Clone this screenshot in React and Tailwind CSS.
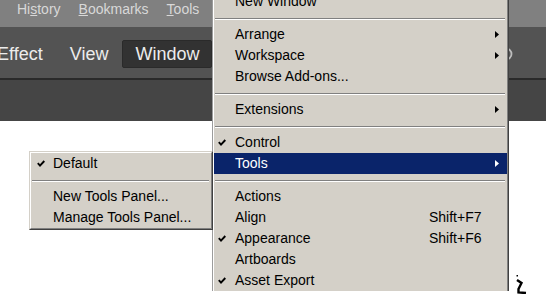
import React from 'react';

const windowItems = [
  { label: 'New Window' },
  { sep: true },
  { label: 'Arrange', arrow: true },
  { label: 'Workspace', arrow: true },
  { label: 'Browse Add-ons...' },
  { sep: true },
  { label: 'Extensions', arrow: true },
  { sep: true },
  { label: 'Control', checked: true },
  { label: 'Tools', arrow: true, active: true },
  { sep: true },
  { label: 'Actions' },
  { label: 'Align', shortcut: 'Shift+F7' },
  { label: 'Appearance', shortcut: 'Shift+F6', checked: true },
  { label: 'Artboards' },
  { label: 'Asset Export', checked: true },
];

const toolsItems = [
  { label: 'Default', checked: true },
  { sep: true },
  { label: 'New Tools Panel...' },
  { label: 'Manage Tools Panel...' },
];

function Check({ color = '#000' }) {
  return (
    <svg width="8" height="7" viewBox="0 0 8 7">
      <path d="M0.8 3.2 L3 5.6 L7.3 1" fill="none" stroke={color} strokeWidth="1.9" />
    </svg>
  );
}

function Arrow({ color = '#000' }) {
  return (
    <svg width="4" height="7" viewBox="0 0 4 7">
      <path d="M0 0 L4 3.5 L0 7 Z" fill={color} />
    </svg>
  );
}

function Separator() {
  return (
    <div className="pt-[6px] pb-[4px]">
      <div className="ml-[1px] mr-[2px] border-t border-b border-t-[#808080] border-b-white" />
    </div>
  );
}

function MenuRow({ item }) {
  const fg = item.active ? '#ffffff' : '#000000';
  return (
    <div
      className={
        'flex items-center h-[21px] ' +
        (item.active ? 'bg-[#0a246a] text-white' : 'text-black')
      }
    >
      <div className="w-[21px] shrink-0 flex pl-[4px]">
        {item.checked && <Check color={fg} />}
      </div>
      <span className="flex-1 whitespace-nowrap">{item.label}</span>
      <span className="w-[66px] whitespace-nowrap">{item.shortcut}</span>
      <div className="w-[12px] flex">{item.arrow && <Arrow color={fg} />}</div>
    </div>
  );
}

export default function App() {
  return (
    <div className="relative w-[546px] h-[294px] overflow-hidden bg-white font-['Liberation_Sans',Arial,sans-serif]">
      {/* browser menu bar */}
      <div className="h-[27px] bg-[#808080] flex items-start pt-[1px] pl-[17px] gap-[18px] text-[14px] leading-[16px] text-[#d8d8d8]">
        <span>
          Hi<span className="underline">s</span>tory
        </span>
        <span>
          <span className="underline">B</span>ookmarks
        </span>
        <span>
          <span className="underline">T</span>ools
        </span>
      </div>

      {/* app menu bar */}
      <div className="h-[51px] bg-[#535353] flex items-center pt-[3px] text-[18px] text-[#ececec]">
        <span className="ml-[-3px]">Effect</span>
        <span className="ml-[27px]">View</span>
        <div className="ml-[14px] h-[28px] w-[90px] flex items-center justify-center bg-[#323232] border border-[#2a2a2a] rounded-[2px]">
          Window
        </div>
        <svg className="ml-auto mr-[33px]" width="10" height="14" viewBox="0 0 10 14">
          <circle cx="3" cy="7" r="5.5" fill="none" stroke="#bdbdbd" strokeWidth="1.8" />
        </svg>
      </div>
      <div className="h-[2px] bg-[#2a2a2a]" />
      <div className="h-[41px] bg-[#454545]" />

      {/* cursor fragment */}
      <svg className="absolute left-[514px] top-[272px]" width="14" height="22" viewBox="0 0 14 22">
        <rect x="2.5" y="3" width="1.5" height="1.5" fill="#000" />
        <path d="M3 8 L7.5 11 L4.5 17 L4.5 20.5 L12 21" fill="none" stroke="#000" strokeWidth="2.4" />
      </svg>

      {/* Window menu */}
      <div className="absolute left-[212px] top-[-9px] w-[297px] border-l border-r border-l-[#9c9c9c] border-r-[#404040] text-[14px]">
        <div className="bg-[#d4d0c8] border-l border-r border-l-white border-r-[#808080]">
          {windowItems.map((item, i) =>
            item.sep ? <Separator key={i} /> : <MenuRow key={i} item={item} />
          )}
        </div>
      </div>

      {/* Tools submenu */}
      <div className="absolute left-[29px] top-[151px] w-[184px] border border-t-[#d4d0c8] border-l-[#d4d0c8] border-b-[#404040] border-r-[#404040] text-[14px]">
        <div className="bg-[#d4d0c8] border border-t-white border-l-white border-b-[#808080] border-r-[#808080]">
          {toolsItems.map((item, i) =>
            item.sep ? (
              <Separator key={i} />
            ) : (
              <div key={i} className="flex items-center h-[21px] text-black">
                <div className="w-[22px] shrink-0 flex pl-[6px]">
                  {item.checked && <Check />}
                </div>
                <span className="whitespace-nowrap">{item.label}</span>
              </div>
            )
          )}
        </div>
      </div>
    </div>
  );
}
